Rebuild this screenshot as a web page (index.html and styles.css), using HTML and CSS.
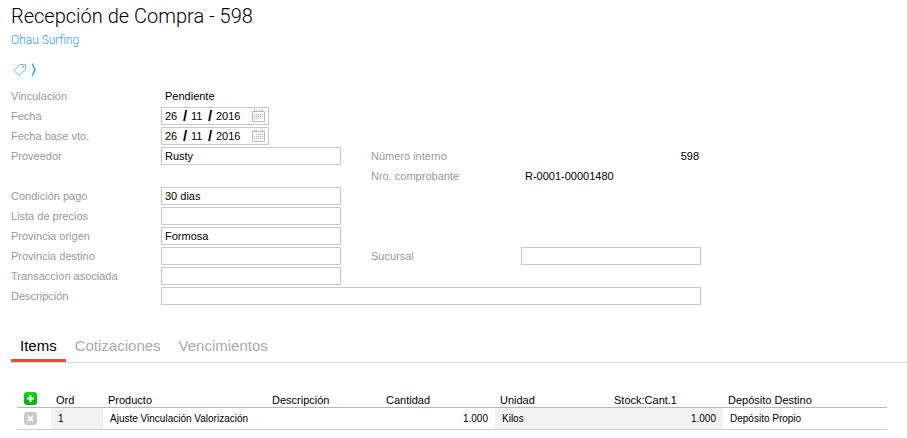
FILE: index.html
```html
<!DOCTYPE html>
<html lang="es">
<head>
  <meta charset="UTF-8" />
  <meta name="viewport" content="width=device-width, initial-scale=1.0" />
  <title>Recepción de Compra - 598</title>
  <link rel="stylesheet" href="styles.css">
</head>
<body>
  <svg class="sprite" aria-hidden="true">
    <symbol id="calendar" viewBox="0 0 13 14">
      <path d="M.5 2.5h12v10H.5zM2.5 0v2M4.5 1v1M8.5 1v1M10.5 0v2" fill="none" stroke="#bbb" />
      <path d="M4 5.5h7M2 7.5h9M2 9.5h7" fill="none" stroke="#aaa" stroke-dasharray="1 1" />
    </symbol>
  </svg>

  <header class="page-header">
    <h1>Recepción de Compra - 598</h1>
    <a class="company" href="#">Ohau Surfing</a>
    <div class="tags">
      <button type="button" class="icon-btn" aria-label="Etiquetas">
        <svg width="14" height="14" viewBox="0 0 14 14">
          <path d="M.8 7.5L7.2 1.5L12.5 1.5L12.5 6.5L6.3 12.8Z" fill="none" stroke="#6fb9f3" />
          <circle cx="10" cy="4" r="1" fill="#6fb9f3" />
        </svg>
      </button>
      <button type="button" class="icon-btn" aria-label="Desplegar">
        <svg width="6" height="14" viewBox="0 0 6 14">
          <path d="M1 .5L4 6.5L1 13" fill="none" stroke="#2f9df0" stroke-width="1.4" />
        </svg>
      </button>
    </div>
  </header>

  <form class="form">
    <span class="label">Vinculación</span>
    <span class="value">Pendiente</span>

    <label for="fecha">Fecha</label>
    <div class="date">
      <input id="fecha" class="day" type="text" value="26"><span class="slash">/</span>
      <input class="month" type="text" value="11" aria-label="Mes"><span class="slash">/</span>
      <input class="year" type="text" value="2016" aria-label="Año">
      <button type="button" class="icon-btn" aria-label="Calendario"><svg width="13" height="14"><use href="#calendar" /></svg></button>
    </div>

    <label for="fecha-base">Fecha base vto.</label>
    <div class="date">
      <input id="fecha-base" class="day" type="text" value="26"><span class="slash">/</span>
      <input class="month" type="text" value="11" aria-label="Mes"><span class="slash">/</span>
      <input class="year" type="text" value="2016" aria-label="Año">
      <button type="button" class="icon-btn" aria-label="Calendario"><svg width="13" height="14"><use href="#calendar" /></svg></button>
    </div>

    <label for="proveedor">Proveedor</label>
    <input id="proveedor" class="field" type="text" value="Rusty">
    <span class="label second">Número interno</span>
    <span class="value number">598</span>

    <span class="label second">Nro. comprobante</span>
    <span class="value">R-0001-00001480</span>

    <label for="condicion">Condición pago</label>
    <input id="condicion" class="field" type="text" value="30 dias">

    <label for="lista">Lista de precios</label>
    <input id="lista" class="field" type="text">

    <label for="origen">Provincia origen</label>
    <input id="origen" class="field" type="text" value="Formosa">

    <label for="destino">Provincia destino</label>
    <input id="destino" class="field" type="text">
    <label for="sucursal" class="second">Sucursal</label>
    <input id="sucursal" class="field" type="text">

    <label for="transaccion">Transaccion asociada</label>
    <input id="transaccion" class="field" type="text">

    <label for="descripcion">Descripción</label>
    <input id="descripcion" class="field wide" type="text">
  </form>

  <nav class="tabs">
    <a class="tab active" href="#items">Items</a>
    <a class="tab" href="#cotizaciones">Cotizaciones</a>
    <a class="tab" href="#vencimientos">Vencimientos</a>
  </nav>

  <section class="items" id="items">
    <table>
      <colgroup>
        <col class="col-action"><col class="col-ord"><col class="col-product">
        <col class="col-mid"><col class="col-mid"><col class="col-mid"><col class="col-mid">
        <col class="col-product">
      </colgroup>
      <thead>
        <tr>
          <th class="action">
            <button type="button" class="icon-btn" aria-label="Agregar">
              <svg width="13" height="13" viewBox="0 0 13 13">
                <defs>
                  <linearGradient id="green" x2="0" y2="1"><stop stop-color="#00dd0c" /><stop offset="1" stop-color="#00ad0b" /></linearGradient>
                </defs>
                <rect width="13" height="13" rx="3" fill="url(#green)" />
                <path d="M6.5 3v7M3 6.5h7" stroke="#fff" stroke-width="2" />
              </svg>
            </button>
          </th>
          <th>Ord</th>
          <th>Producto</th>
          <th>Descripción</th>
          <th>Cantidad</th>
          <th>Unidad</th>
          <th>Stock:Cant.1</th>
          <th>Depósito Destino</th>
        </tr>
      </thead>
      <tbody>
        <tr>
          <td class="action">
            <button type="button" class="icon-btn" aria-label="Eliminar">
              <svg width="13" height="13" viewBox="0 0 13 13">
                <rect width="13" height="13" rx="3" fill="#c8c8c8" />
                <path d="M4 4l5 5M9 4l-5 5" stroke="#fff" stroke-width="2" />
              </svg>
            </button>
          </td>
          <td class="locked">1</td>
          <td>Ajuste Vinculación Valorización</td>
          <td></td>
          <td class="number">1.000</td>
          <td class="locked">Kilos</td>
          <td class="locked number">1.000</td>
          <td>Depósito Propio</td>
        </tr>
      </tbody>
    </table>
  </section>
</body>
</html>
```
FILE: styles.css
```css
* {
  box-sizing: border-box;
}
body {
  margin: 0;
  padding: 4px 0 0 11px;
  background: #fff;
  color: #000;
  font-family: "Liberation Sans", Arial, sans-serif;
  font-size: 11px;
}
.sprite {
  display: none;
}
.page-header {
  font-family: Roboto, sans-serif;
  font-weight: 300;
}
h1 {
  margin: 0;
  font-size: 20px;
  font-weight: 300;
  line-height: 24px;
}
.company {
  display: block;
  color: #2f9df0;
  font-size: 12px;
  line-height: 24px;
  text-decoration: none;
}
.icon-btn {
  display: block;
  padding: 0;
  border: none;
  background: none;
  cursor: pointer;
}
.icon-btn svg {
  display: block;
}
.tags {
  display: flex;
  gap: 4px;
  padding: 11px 2px 9px;
}

/* form */
.form {
  display: grid;
  grid-template-columns: 150px 1fr 30px 150px 1fr;
  grid-auto-rows: 20px;
  align-items: center;
  max-width: 690px;
}
.form label,
.label {
  grid-column: 1;
  color: #999;
}
.form .second {
  grid-column: 4;
}
.value {
  padding: 0 4px;
}
.value.number {
  padding: 0 2px;
}
.number {
  text-align: right;
}
.form input {
  min-width: 0;
  font-family: inherit;
  font-size: 11px;
  color: #000;
}
.field {
  width: 100%;
  height: 18px;
  padding: 0 3px;
  border: 1px solid #c8c8c8;
}
.wide {
  grid-column: 2 / 6;
}
.date {
  display: flex;
  align-items: center;
  width: 108px;
  height: 18px;
  padding: 0 3px;
  border: 1px solid #c8c8c8;
}
.date input {
  padding: 0;
  border: none;
  background: none;
}
.day {
  width: 18px;
}
.month {
  width: 17px;
}
.year {
  width: 28px;
}
.slash {
  width: 8px;
  font-size: 15px;
  font-weight: bold;
  line-height: 16px;
}
.date .icon-btn {
  margin-left: auto;
}

/* tabs */
.tabs {
  display: flex;
  margin-top: 27px;
  border-bottom: 1px solid #d8d8d8;
}
.tab {
  padding: 0 9px 1px;
  border-bottom: 3px solid transparent;
  color: #aaa;
  font-size: 15px;
  line-height: 25px;
  text-decoration: none;
}
.tab.active {
  border-color: #e54d34;
  color: #000;
}

/* items */
.items {
  padding: 27px 20px 0 6px;
}
table {
  width: 100%;
  table-layout: fixed;
  border-collapse: collapse;
}
.col-action {
  width: 34px;
}
.col-ord {
  width: 52px;
}
.col-mid {
  width: 114px;
}
th {
  height: 17px;
  padding: 5px 5px 0;
  border-bottom: 1px solid #b8b8b8;
  font-weight: normal;
  line-height: 11px;
  text-align: left;
}
td {
  height: 22px;
  padding: 0 7px;
  border-bottom: 1px solid #d0d0d0;
  font-size: 10px;
}
.locked {
  background: #f2f2f2;
}
th.action,
td.action {
  padding: 0 7px;
}
```
